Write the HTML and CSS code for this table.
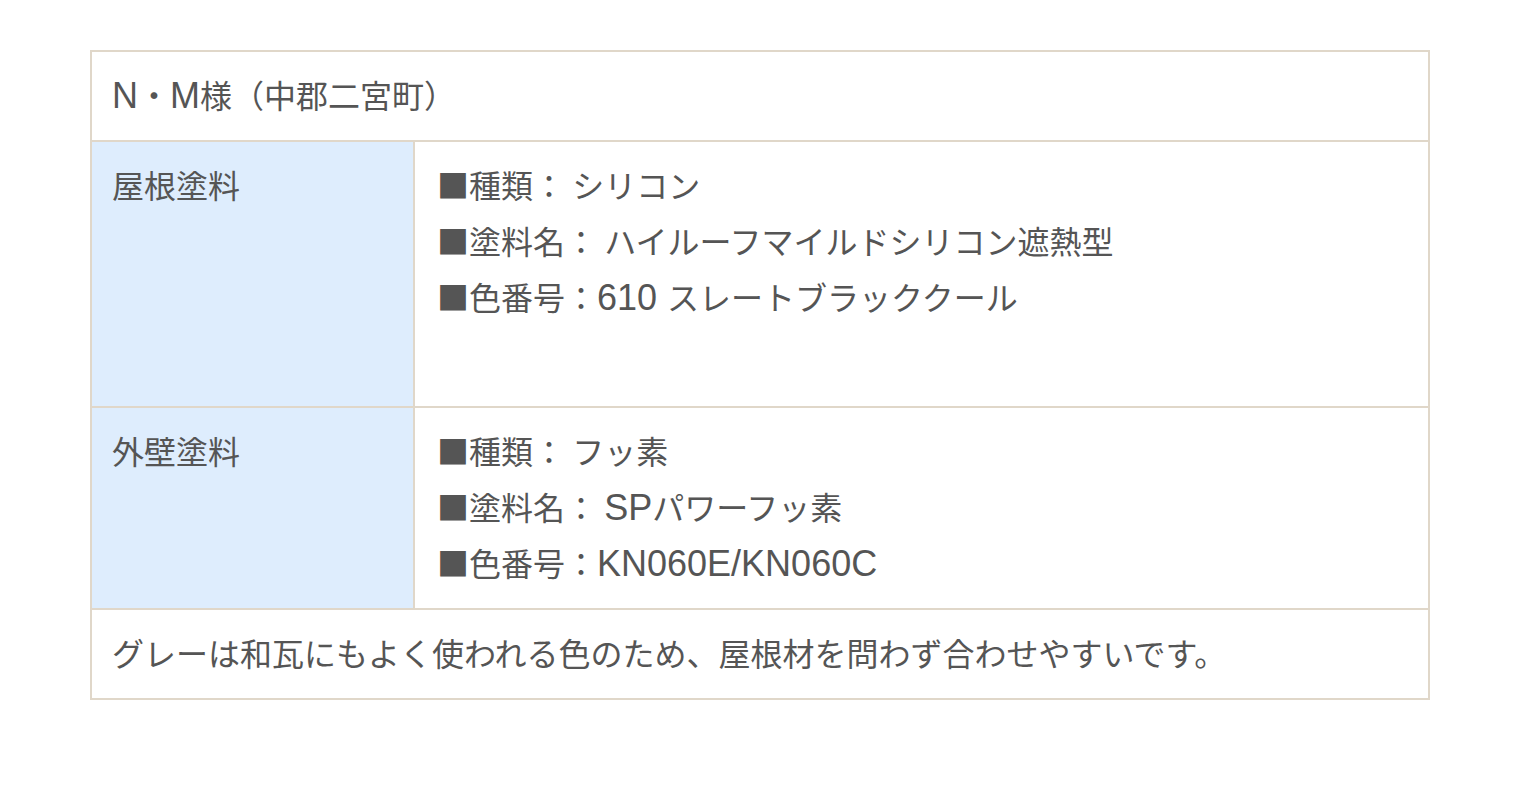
FILE: index.html
```html
<!DOCTYPE html>
<html lang="ja">
<head>
<meta charset="utf-8">
<title>施工事例</title>
<link rel="stylesheet" href="styles.css">
</head>
<body>
<div class="wrap">
  <table class="spec">
    <tr>
      <td class="head" colspan="2"><span class="en">N</span>・<span class="en">M</span>様（中郡二宮町）</td>
    </tr>
    <tr>
      <td class="label">屋根塗料</td>
      <td class="content tall">■種類： シリコン<br>■塗料名： ハイルーフマイルドシリコン遮熱型<br>■色番号：<span class="en">610 </span>スレートブラッククール</td>
    </tr>
    <tr>
      <td class="label">外壁塗料</td>
      <td class="content">■種類： フッ素<br>■塗料名： <span class="en">SP</span>パワーフッ素<br>■色番号：<span class="en">KN060E/KN060C</span></td>
    </tr>
    <tr>
      <td class="foot" colspan="2">グレーは和瓦にもよく使われる色のため、屋根材を問わず合わせやすいです。</td>
    </tr>
  </table>
</div>
</body>
</html>
```

FILE: styles.css
```css
html, body {
  margin: 0;
  padding: 0;
  background: #ffffff;
}

.wrap {
  padding: 50px 90px;
}

.spec {
  width: 100%;
  border-collapse: separate;
  border-spacing: 0;
  border-top: 2px solid #e0d7c9;
  border-left: 2px solid #e0d7c9;
  font-family: "Noto Sans CJK JP", sans-serif;
  font-size: 32px;
  line-height: 56px;
  color: #555555;
}

.spec td {
  border-right: 2px solid #e0d7c9;
  border-bottom: 2px solid #e0d7c9;
  padding: 14px 20px 18px;
  vertical-align: top;
  text-align: left;
}

.spec .label {
  width: 281px;
  background: #deedfd;
}

.spec .content {
  padding-left: 22px;
}

.spec .content.tall {
  padding-bottom: 82px;
}

.en {
  font-family: "Liberation Sans", Arial, sans-serif;
  font-size: 36px;
  line-height: 1;
}
```
